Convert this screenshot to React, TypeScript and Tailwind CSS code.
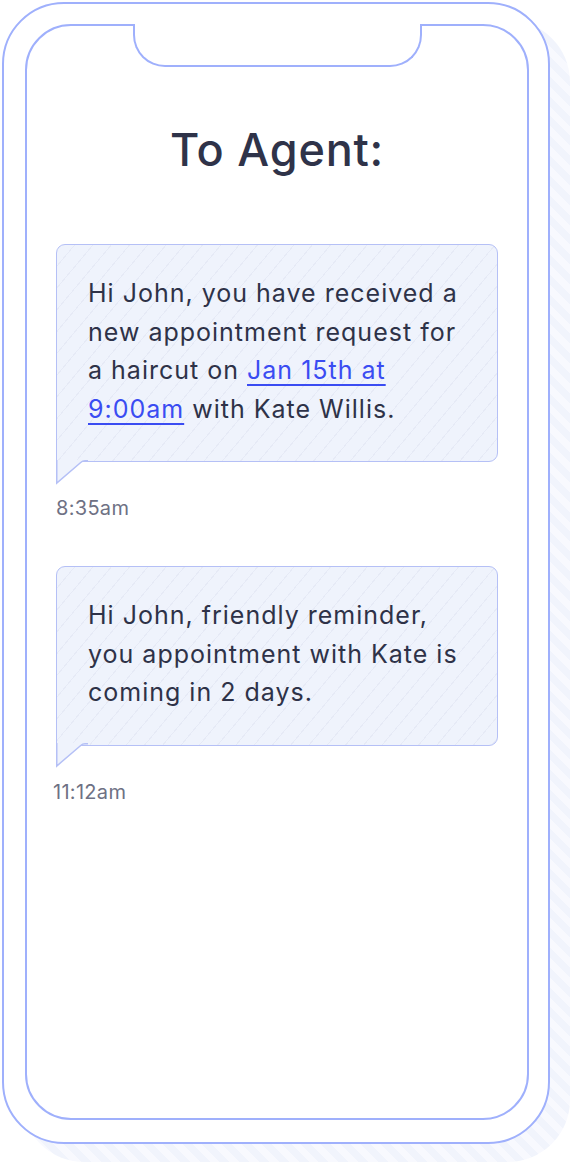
const font = { fontFamily: "Inter, 'Noto Sans', sans-serif" };

const Tail = () => (
  <svg
    className="absolute left-[-1.5px] top-full -mt-[1.5px]"
    width="32"
    height="25"
    viewBox="0 0 32 25"
  >
    <path d="M0.75 0 L0.75 23 L25 2.2 Q26.5 0.75 29 0.75 L32 0.75 L32 0 Z" fill="#eff3fc" />
    <path
      d="M0.75 0 L0.75 23 L25 2.2 Q26.5 0.75 29 0.75 L32 0.75"
      fill="none"
      stroke="#b5c0f6"
      strokeWidth="1.5"
    />
  </svg>
);

const Bubble = ({ children, time, timeClass }: { children: React.ReactNode; time: string; timeClass?: string }) => (
  <div className="flex flex-col">
    <div className="relative rounded-[9px] rounded-bl-none border-[1.5px] border-[#b5c0f6] bg-[#eff3fc] bg-[repeating-linear-gradient(130deg,#eff3fc_0px,#eff3fc_13px,#e6eaf6_13px,#e6eaf6_14px)] pl-[31px] pr-[20px] pt-[29px] pb-[33px] text-[25px] leading-[38.5px] tracking-[1px] text-[#2e3248]">
      {children}
      <Tail />
    </div>
    <div className={`mt-[34px] text-[20px] leading-[24px] tracking-[0.3px] text-[#6e7184] ${timeClass ?? ""}`}>{time}</div>
  </div>
);

export default function App() {
  return (
    <div className="relative h-[1164px] w-[572px] overflow-hidden bg-white" style={font}>
      {/* hatched drop shadow behind the phone */}
      <div className="absolute left-[22px] top-[20px] h-[1142px] w-[548px] rounded-[62px] bg-[repeating-linear-gradient(45deg,#f1f4fc_0px,#f1f4fc_7px,#f8f9fe_7px,#f8f9fe_14px)]" />

      <div className="relative ml-[2px] mt-[2px] flex h-[1142px] w-[548px] flex-col rounded-[62px] border-2 border-[#9fb0fc] bg-white pb-[22px] pl-[21px] pr-[19px] pt-[20px]">
        <div className="relative flex flex-1 flex-col rounded-[46px] border-2 border-[#9fb0fc] bg-white">
          {/* notch */}
          <div className="absolute left-[106px] top-[-2px] h-[43px] w-[289px] rounded-b-[32px] border-x-2 border-b-2 border-[#9fb0fc] bg-white" />

          <h1 className="mt-[98px] text-center text-[45px] font-medium leading-[52px] tracking-[0.8px] text-[#2f3349]">
            To Agent:
          </h1>

          <div className="mt-[68px] flex flex-col gap-[46px] px-[29px]">
            <Bubble time="8:35am">
              <span className="block whitespace-nowrap">Hi John, you have received a</span>
              <span className="block whitespace-nowrap">new appointment request for</span>
              <span className="block whitespace-nowrap">
                a haircut on{" "}
                <a href="#" className="text-[#3a4cf2] underline decoration-[1.5px] underline-offset-[5px]">
                  Jan 15th at
                </a>
              </span>
              <span className="block whitespace-nowrap">
                <a href="#" className="text-[#3a4cf2] underline decoration-[1.5px] underline-offset-[5px]">
                  9:00am
                </a>{" "}
                with Kate Willis.
              </span>
            </Bubble>

            <Bubble time="11:12am" timeClass="-ml-[3px]">
              <span className="block whitespace-nowrap">Hi John, friendly reminder,</span>
              <span className="block whitespace-nowrap">you appointment with Kate is</span>
              <span className="block whitespace-nowrap">coming in 2 days.</span>
            </Bubble>
          </div>
        </div>
      </div>
    </div>
  );
}
